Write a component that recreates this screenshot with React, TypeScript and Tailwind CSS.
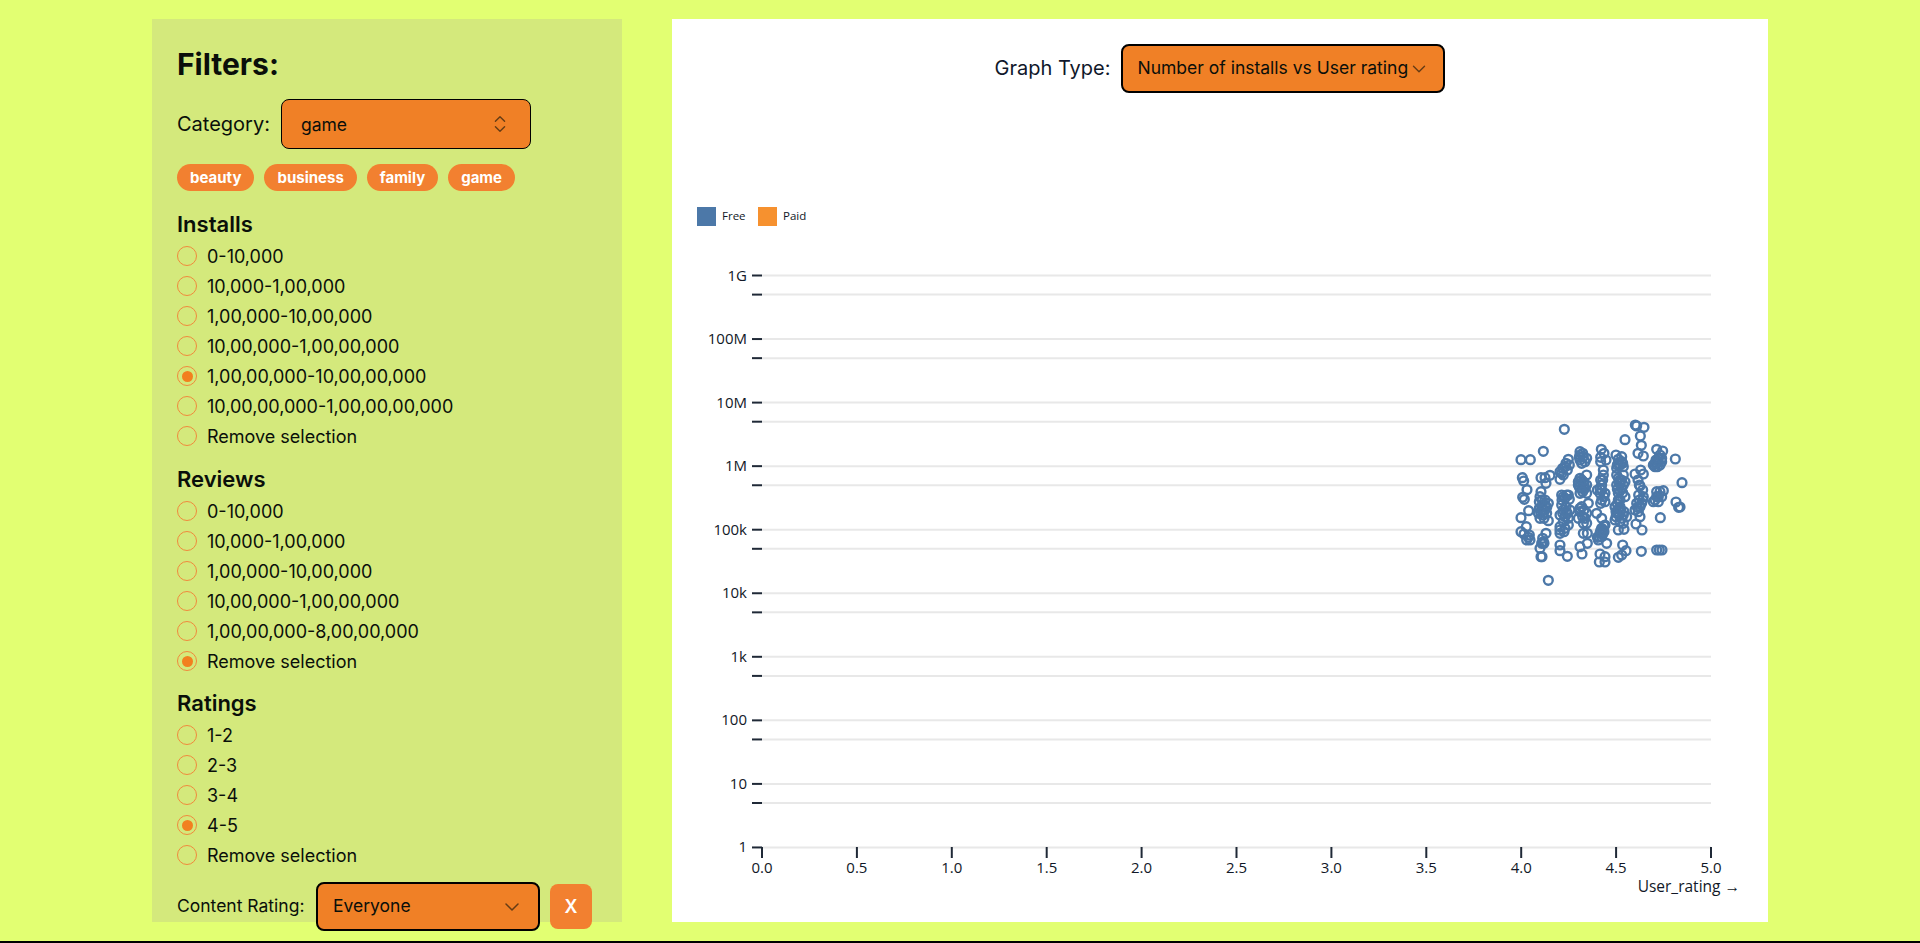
import { ChevronDown, ChevronsUpDown } from "lucide-react";

// points traced from the chart, in 3x crop coords (origin 1480,400)
const rawPoints: [number, number][] = [
  [253, 88], [205, 541], [466, 75], [470, 78], [492, 82], [481, 108], [435, 119], [484, 136], [190, 154], [123, 179], [151, 179],
  [586, 177], [606, 248], [588, 306], [600, 321], [596, 322], [541, 353], [123, 353], [146, 332], [486, 390], [484, 454],
  [530, 450], [538, 450], [546, 450], [428, 435], [262, 469], [306, 462], [322, 430],
  [127, 233], [131, 243], [141, 269], [128, 292], [133, 298], [123, 395], [139, 380], [148, 405], [140, 420], [150, 420],
  [183, 233], [195, 233], [210, 226], [198, 250], [183, 275], [180, 290], [195, 300], [205, 310], [185, 320], [195, 330],
  [175, 340], [190, 345], [205, 362], [180, 355], [198, 400], [188, 415], [192, 430], [180, 445], [183, 470], [186, 470],
  [265, 178], [258, 190], [248, 205], [240, 215], [262, 210], [240, 238], [245, 285], [260, 285], [265, 285], [245, 315],
  [258, 320], [270, 330], [240, 345], [255, 350], [265, 355], [250, 365], [240, 380], [255, 385], [240, 400], [265, 375],
  [240, 435], [240, 452], [300, 155], [300, 165], [320, 175], [305, 190], [300, 180], [320, 225], [300, 235], [310, 245],
  [295, 255], [320, 255], [305, 265], [300, 280], [320, 280], [325, 310], [305, 320], [300, 335], [320, 340], [295, 355],
  [315, 355], [310, 370], [320, 370], [310, 400], [322, 400], [300, 440], [364, 148], [362, 172], [378, 180], [370, 210],
  [370, 225], [362, 240], [365, 255], [360, 280], [375, 280], [365, 300], [375, 305], [350, 340], [365, 355], [375, 375],
  [370, 390], [360, 400], [365, 410], [355, 420], [380, 430], [360, 462], [375, 470], [358, 486], [375, 486], [408, 165],
  [425, 170], [415, 190], [430, 200], [410, 205], [420, 240], [435, 245], [410, 255], [425, 265], [415, 280], [435, 290],
  [405, 320], [420, 320], [410, 340], [430, 345], [440, 350], [405, 360], [420, 365], [415, 390], [432, 388], [415, 472],
  [425, 465], [438, 452], [474, 160], [490, 168], [482, 210], [490, 222], [465, 222], [478, 255], [490, 290], [470, 310],
  [480, 320], [465, 330], [480, 350], [468, 372], [530, 148], [548, 153], [535, 175], [530, 190], [545, 185], [525, 200],
  [530, 275], [550, 272], [525, 300], [535, 305], [540, 165], [520, 195], [410, 225], [430, 225], [415, 300], [295, 245],
  // dense blobs
  [415, 178], [425, 185], [420, 195], [412, 195], [428, 190], [415, 235], [425, 240], [418, 250], [430, 255], [412, 268],
  [420, 272], [428, 278], [412, 312], [422, 330], [415, 328], [408, 350], [425, 355], [418, 345], [432, 335], [305, 240],
  [312, 255], [302, 252], [315, 265], [298, 262], [308, 275], [365, 385], [372, 378], [362, 392], [368, 402], [358, 410],
  [352, 412], [372, 395], [535, 185], [528, 180], [540, 195], [532, 200], [525, 190], [545, 175], [195, 315], [188, 330],
  [200, 322], [182, 338], [192, 355], [178, 325], [250, 330], [262, 340], [248, 340], [258, 335], [255, 295], [250, 290],
  [478, 300], [485, 310], [472, 322], [475, 335], [365, 270], [372, 290], [360, 265], [368, 240], [530, 290], [540, 275],
  [535, 290], [310, 170], [315, 185], [245, 220], [250, 225], [190, 425], [185, 430],
  [298, 172], [308, 160], [268, 195], [255, 200], [480, 258], [488, 270], [474, 240], [488, 300], [352, 270], [362, 310],
  [308, 350], [300, 325], [312, 330], [240, 390], [252, 395], [246, 300], [268, 298], [132, 402], [145, 412], [200, 340],
  [186, 300], [178, 305], [362, 185], [372, 160], [420, 300], [408, 335], [430, 370], [476, 285], [545, 290], [520, 305],
];

const yLabels = ["1G", "100M", "10M", "1M", "100k", "10k", "1k", "100", "10", "1"];
const xLabels = ["0.0", "0.5", "1.0", "1.5", "2.0", "2.5", "3.0", "3.5", "4.0", "4.5", "5.0"];
const Y_TOP = 275.5;
const DECADE = 63.55;
const X_LEFT = 762;
const X_STEP = 94.9;

const Radio = ({ label, checked = false }: { label: string; checked?: boolean }) => (
  <div className="flex h-[30px] items-center gap-[10px] text-[18px]">
    <span className="flex size-5 items-center justify-center rounded-full border-[1.25px] border-[#f08a3c]">
      {checked && <span className="size-[11px] rounded-full bg-[#f2801f]" />}
    </span>
    {label}
  </div>
);

const Group = ({
  title,
  options,
  selected,
  className,
}: {
  title: string;
  options: string[];
  selected: string;
  className: string;
}) => (
  <div className={className}>
    <h2 className="mb-[2px] h-[30px] text-[22px] leading-[30px] font-semibold">{title}</h2>
    {options.map((o) => (
      <Radio key={o} label={o} checked={o === selected} />
    ))}
  </div>
);

const Chart = () => (
  <svg
    width={1096}
    height={733}
    viewBox="672 189 1096 733"
    className="block"
    fontFamily="'Open Sans', sans-serif"
  >
    <rect x={697} y={207} width={19} height={19} fill="#4c78a8" />
    <text x={722} y={220} fontSize={11.5} fill="#111827">Free</text>
    <rect x={758} y={207} width={19} height={19} fill="#f58518" opacity={0.9} />
    <text x={783} y={220} fontSize={11.5} fill="#111827">Paid</text>

    {yLabels.map((label, i) => {
      const y = Y_TOP + i * DECADE;
      const minor = y + 19.1;
      return (
        <g key={label}>
          <line x1={762} x2={1711} y1={y} y2={y} stroke="#e8e8e8" strokeWidth={2} />
          <line x1={752} x2={762} y1={y} y2={y} stroke="#1f2937" strokeWidth={2} />
          <text x={747} y={y + 5} fontSize={15} textAnchor="end" fill="#111827">{label}</text>
          {i < yLabels.length - 1 && (
            <>
              <line x1={762} x2={1711} y1={minor} y2={minor} stroke="#e8e8e8" strokeWidth={2} />
              <line x1={752} x2={762} y1={minor} y2={minor} stroke="#1f2937" strokeWidth={2} />
            </>
          )}
        </g>
      );
    })}

    {xLabels.map((label, i) => {
      const x = X_LEFT + i * X_STEP;
      return (
        <g key={label}>
          <line x1={x} x2={x} y1={847} y2={858} stroke="#1f2937" strokeWidth={2} />
          <text x={x} y={873} fontSize={15} textAnchor="middle" fill="#111827">{label}</text>
        </g>
      );
    })}
    <text x={1740} y={892} fontSize={15.5} textAnchor="end" fill="#111827">User_rating →</text>

    {rawPoints.map(([x, y], i) => (
      <circle
        key={i}
        cx={1480 + x / 3}
        cy={400 + y / 3}
        r={4.4}
        fill="none"
        stroke="#4c78a8"
        strokeWidth={2.4}
      />
    ))}
  </svg>
);

export default function App() {
  return (
    <div className="flex h-[943px] flex-col overflow-hidden bg-[#e2ff72] font-[Inter,sans-serif] text-[#0a0f0a]">
      <div className="flex h-[941px] gap-[50px] pt-[19px] pl-[152px]">
        {/* FILTERS */}
        <aside className="h-[903px] w-[470px] bg-[#d4e97c] px-[25px] pt-[25px]">
          <h1 className="text-[30px] leading-[40px] font-bold">Filters:</h1>

          <div className="mt-[15px] flex items-center gap-[11px]">
            <span className="text-[20px]">Category:</span>
            <div className="flex h-[50px] w-[250px] items-center justify-between rounded-lg border-[1.5px] border-black bg-[#f08026] pt-[2px] pr-[19px] pl-[19px] text-[17.5px]">
              game
              <ChevronsUpDown size={22} strokeWidth={1.5} className="-mt-[2px] opacity-60" />
            </div>
          </div>

          <div className="mt-[15px] flex gap-[10px]">
            {["beauty", "business", "family", "game"].map((c) => (
              <span
                key={c}
                className="flex h-[27px] items-center rounded-full bg-[#f28030] px-[13px] pt-px text-[15px] font-bold text-white"
              >
                {c}
              </span>
            ))}
          </div>

          <Group
            className="mt-[18px]"
            title="Installs"
            selected="1,00,00,000-10,00,00,000"
            options={[
              "0-10,000",
              "10,000-1,00,000",
              "1,00,000-10,00,000",
              "10,00,000-1,00,00,000",
              "1,00,00,000-10,00,00,000",
              "10,00,00,000-1,00,00,00,000",
              "Remove selection",
            ]}
          />
          <Group
            className="mt-[13px]"
            title="Reviews"
            selected="Remove selection"
            options={[
              "0-10,000",
              "10,000-1,00,000",
              "1,00,000-10,00,000",
              "10,00,000-1,00,00,000",
              "1,00,00,000-8,00,00,000",
              "Remove selection",
            ]}
          />
          <Group
            className="mt-[12px]"
            title="Ratings"
            selected="4-5"
            options={["1-2", "2-3", "3-4", "4-5", "Remove selection"]}
          />

          <div className="mt-[12px] flex items-center">
            <span className="w-[139px] text-[17.5px]">Content Rating:</span>
            <div className="flex h-[49px] w-[224px] items-center justify-between rounded-lg border-2 border-black bg-[#f08026] pr-[14px] pl-[15px] text-[17.5px]">
              Everyone
              <ChevronDown size={24} strokeWidth={1.5} className="opacity-60" />
            </div>
            <button className="ml-[10px] h-[45px] w-[42px] rounded-lg bg-[#f28030] text-[18px] font-semibold text-white">
              X
            </button>
          </div>
        </aside>

        {/* GRAPH */}
        <main className="h-[903px] w-[1096px] bg-white">
          <div className="flex h-[170px] items-start justify-center gap-[11px] pt-[25px]">
            <span className="h-[49px] text-[20px] leading-[49px] text-[#0f172a]">Graph Type:</span>
            <div className="flex h-[49px] w-[324px] items-center rounded-lg border-2 border-black bg-[#f08026] pl-[14px] text-[17.5px]">
              Number of installs vs User rating
              <ChevronDown size={22} strokeWidth={1.5} className="opacity-60" />
            </div>
          </div>
          <Chart />
        </main>
      </div>
      <div className="h-[2px] bg-black" />
    </div>
  );
}
